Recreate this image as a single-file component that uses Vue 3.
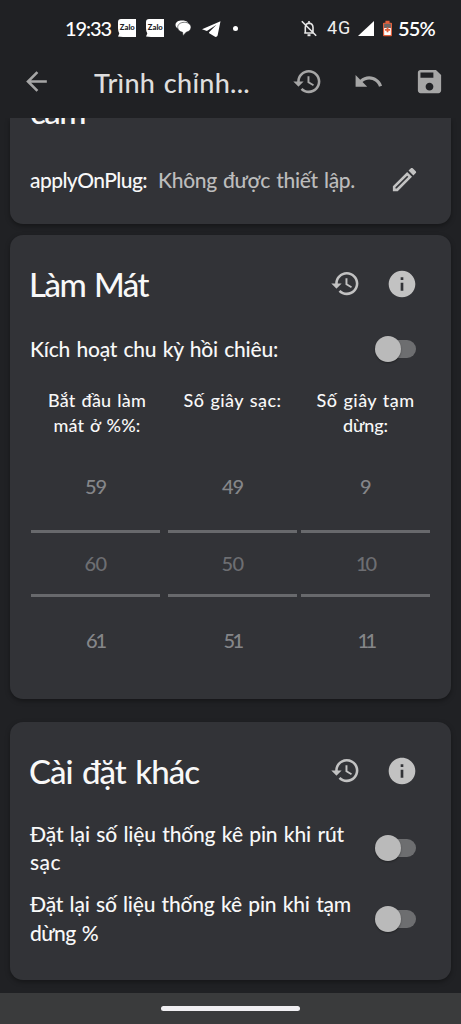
<script setup>
const icons = {
  back: 'M20 11H7.83l5.59-5.59L12 4l-8 8 8 8 1.41-1.41L7.83 13H20v-2z',
  history:
    'M13 3c-4.97 0-9 4.03-9 9H1l3.89 3.89.07.14L9 12H6c0-3.87 3.13-7 7-7s7 3.13 7 7-3.13 7-7 7c-1.93 0-3.68-.79-4.94-2.06l-1.42 1.42C8.27 19.99 10.51 21 13 21c4.97 0 9-4.03 9-9s-4.03-9-9-9zm-1 5v5l4.28 2.54.72-1.21-3.5-2.08V8H12z',
  undo: 'M12.5 8c-2.65 0-5.05.99-6.9 2.6L2 7v9h9l-3.62-3.62c1.39-1.16 3.16-1.88 5.12-1.88 3.54 0 6.55 2.31 7.6 5.5l2.37-.78C21.08 11.03 17.15 8 12.5 8z',
  save: 'M17 3H5c-1.11 0-2 .9-2 2v14c0 1.1.89 2 2 2h14c1.1 0 2-.9 2-2V7l-4-4zm-5 16c-1.66 0-3-1.34-3-3s1.34-3 3-3 3 1.34 3 3-1.34 3-3 3zm3-10H5V5h10v4z',
  edit: 'M17.66 3c-.25 0-.51.1-.7.29l-1.83 1.83 3.75 3.75 1.83-1.83c.39-.39.39-1.02 0-1.41l-2.34-2.34c-.2-.2-.45-.29-.71-.29zM14.06 6.19L3 17.25V21h3.75L17.81 9.94l-3.75-3.75zM14.06 9.02l.92.92L5.92 19H5v-.92z',
  info: 'M12 2C6.48 2 2 6.48 2 12s4.48 10 10 10 10-4.48 10-10S17.52 2 12 2zm1 15h-2v-6h2v6zm0-8h-2V7h2v2z',
}

const pickers = [
  { label: [['Bắt đầu làm', 98], ['mát ở %%:', 87]], values: [['59', 21], ['60', 22], ['61', 19]] },
  { label: [['Số giây sạc:', 98]], values: [['49', 21], ['50', 22], ['51', 18]] },
  { label: [['Số giây tạm', 98], ['dừng:', 45]], values: [['9', 11], ['10', 19], ['11', 16]] },
]

const options = [
  [['Đặt lại số liệu thống kê pin khi rút', 314], ['sạc', 31]],
  [['Đặt lại số liệu thống kê pin khi tạm', 321], ['dừng %', 68]],
]

// Tracks a single line of text so that it spans the given width in pixels.
const vFit = {
  mounted(el, { value }) {
    const natural = el.getBoundingClientRect().width
    const count = [...el.textContent.trim()].length
    const spacing = (value - natural) / count
    el.style.letterSpacing = `${spacing.toFixed(3)}px`
  },
}
</script>

<template>
  <div class="screen">
    <header class="status">
      <div class="status-left">
        <div class="clock"><span v-fit="46" class="t">19:33</span></div>
        <svg v-for="n in 2" :key="n" class="zalo" viewBox="0 0 18 18">
          <path d="M3 0H18V18H5L0 17.4L1.3 14.5Q0 12.5 0 9V3Q0 0 3 0Z" fill="#fff" />
          <text x="9.3" y="11.4" text-anchor="middle" textLength="15" lengthAdjust="spacingAndGlyphs">Zalo</text>
        </svg>
        <svg class="chat" viewBox="0 0 16 16">
          <path d="M4.5 9.2C1.8 8.4.5 6.8.5 5C.5 2 3.5.6 7 .6C9.5.6 11.8 1.2 13 2.6" fill="#fff" />
          <path d="M9.4 2.3C13.3 2.3 16 4.4 16 7.3C16 9.9 14 11.6 11.2 12.2L8 15.8L7.6 12.3C4.6 11.8 2.7 9.9 2.7 7.3C2.7 4.4 5.4 2.3 9.4 2.3Z" fill="#fff" stroke="#202124" stroke-width=".6" />
        </svg>
        <svg class="plane" viewBox="0 0 19 16">
          <path d="M18.5.3L0 8.2L4.9 10L14.5 3.7L7 11.2L7.2 12.3L13.5 16Q15.3 16 15.6 14.6Z" fill="#fff" />
        </svg>
        <i class="dot"></i>
      </div>
      <div class="status-right">
        <svg class="bell" viewBox="0 0 16 17">
          <g fill="none" stroke="#e6e6e6" stroke-width="1.6">
            <path d="M3.2 13H13M4.3 12.5V7.2Q4.5 3.5 8 3.1Q11.8 3.5 12 7.2V12.5M8 3V1M.8 1.3L15.2 15.7" />
            <path d="M6.5 15.2H9.5" stroke-width="2" />
          </g>
        </svg>
        <div class="net"><span v-fit="24">4G</span></div>
        <svg class="signal" viewBox="0 0 16 15"><path d="M16 0V15H0Z" fill="#fff" /></svg>
        <svg class="battery" viewBox="0 0 10 17">
          <path d="M2.7 0H7.3V2H9Q10 2 10 3V16Q10 17 9 17H1Q0 17 0 16V3Q0 2 1 2H2.7Z" fill="#e2603c" />
          <path d="M1.3 3.3H8.7V8H1.3Z" fill="#6b6868" />
          <path d="M1.3 8H8.7V15.7H1.3Z" fill="#fff" />
          <path d="M4 7.2H6V9H7.8V11H6V12.6H4V11H2.2V9H4Z" fill="#e2603c" />
        </svg>
        <div class="percent"><span v-fit="37" class="t">55%</span></div>
      </div>
    </header>

    <div class="appbar">
      <svg class="icon" viewBox="0 0 24 24"><path :d="icons.back" /></svg>
      <h1><span v-fit="156" class="t">Trình chỉnh...</span></h1>
      <div class="actions">
        <svg v-for="name in ['history', 'undo', 'save']" :key="name" class="icon" viewBox="0 0 24 24">
          <path :d="icons[name]" />
        </svg>
      </div>
    </div>

    <main class="content">
      <section class="card plug">
        <h2 class="cut"><span v-fit="55" class="t">cắm</span></h2>
        <div class="plug-row">
          <span v-fit="117" class="t">applyOnPlug:</span>
          <span v-fit="197" class="t muted">Không được thiết lập.</span>
          <svg class="icon light edit" viewBox="0 0 24 24"><path fill-rule="evenodd" :d="icons.edit" /></svg>
        </div>
      </section>

      <section class="card cooling">
        <div class="heading">
          <h2><span v-fit="119" class="t">Làm Mát</span></h2>
          <svg class="icon light" viewBox="0 0 24 24"><path :d="icons.history" /></svg>
          <svg class="icon light" viewBox="0 0 24 24"><path :d="icons.info" /></svg>
        </div>
        <div class="option single">
          <p><span v-fit="248" class="t">Kích hoạt chu kỳ hồi chiêu:</span></p>
          <span class="toggle"><i></i></span>
        </div>
        <div class="pickers">
          <div v-for="(picker, i) in pickers" :key="i" class="picker">
            <div class="label">
              <div v-for="line in picker.label" :key="line[0]"><span v-fit="line[1]" class="t">{{ line[0] }}</span></div>
            </div>
            <div class="wheel">
              <div v-for="(v, k) in picker.values" :key="v[0]" :class="['value', { selected: k === 1 }]">
                <span v-fit="v[1]" class="t">{{ v[0] }}</span>
              </div>
            </div>
          </div>
        </div>
      </section>

      <section class="card other">
        <div class="heading">
          <h2><span v-fit="170" class="t">Cài đặt khác</span></h2>
          <svg class="icon light" viewBox="0 0 24 24"><path :d="icons.history" /></svg>
          <svg class="icon light" viewBox="0 0 24 24"><path :d="icons.info" /></svg>
        </div>
        <div v-for="(option, i) in options" :key="i" class="option">
          <p>
            <template v-for="line in option" :key="line[0]"><span v-fit="line[1]" class="t">{{ line[0] }}</span><br /></template>
          </p>
          <span class="toggle"><i></i></span>
        </div>
      </section>
    </main>

    <footer class="nav"><i></i></footer>
  </div>
</template>

<style>
html,
body {
  background: #202124;
}
</style>

<style scoped>
* {
  box-sizing: border-box;
}
.screen {
  width: 461px;
  height: 1024px;
  display: flex;
  flex-direction: column;
  overflow: hidden;
  background: #202124;
  color: #f8f8f8;
  font-family: Lato, 'Noto Sans', sans-serif;
  font-weight: 500;
  white-space: nowrap;
}
svg {
  display: block;
  flex: none;
}
h1,
h2,
p {
  margin: 0;
  font-weight: inherit;
}
.t {
  display: inline-block;
  word-spacing: 0.06em;
}

.status {
  height: 56px;
  padding: 0 26px 0 65px;
  display: flex;
  justify-content: space-between;
  color: #fff;
  line-height: 58px;
}
.status-left,
.status-right {
  display: flex;
  align-items: center;
}
.clock {
  width: 47px;
  font-size: 20px;
}
.zalo {
  width: 18px;
  height: 18px;
  margin: 0 4px 0 6px;
}
.zalo + .zalo {
  margin: 0 0 0 6px;
}
.zalo text {
  font: 900 7px Lato, sans-serif;
  fill: #202124;
}
.chat {
  width: 16px;
  height: 16px;
  margin-left: 11px;
}
.plane {
  width: 19px;
  height: 16px;
  margin: 1px 0 0 11px;
}
.dot {
  width: 5px;
  height: 5px;
  margin-left: 12px;
  border-radius: 50%;
  background: #fff;
}
.bell {
  width: 16px;
  height: 17px;
}
.net {
  width: 24px;
  margin-left: 10px;
  font: 400 18px/58px Roboto, sans-serif;
  color: #eee;
}
.net span {
  display: inline-block;
}
.signal {
  width: 16px;
  height: 15px;
  margin-left: 7px;
}
.battery {
  width: 9px;
  height: 17px;
  margin: 0 6px 0 9px;
}
.percent {
  width: 37px;
  font-size: 20px;
  font-weight: 600;
}

.appbar {
  height: 62px;
  padding: 10px 16px 0 21px;
  display: flex;
  align-items: flex-start;
}
.appbar h1 {
  margin-left: 42px;
  font-size: 27px;
  line-height: 33px;
  color: #dedede;
}
.icon {
  width: 31px;
  height: 31px;
  fill: #a6a6a6;
}
.icon.light {
  fill: #c2c2c2;
}
.actions {
  margin-left: auto;
  display: flex;
  gap: 30px;
}

.content {
  height: 875px;
  padding: 0 10px;
  overflow: hidden;
}
.card {
  border-radius: 13px;
  background: #323337;
  box-shadow: 0 2px 5px rgba(0, 0, 0, 0.35);
  padding: 0 21px 0 20px;
}
.plug {
  height: 106px;
  border-radius: 0 0 13px 13px;
  overflow: hidden;
}
h2 {
  font-size: 33px;
  line-height: 40px;
}
.heading h2 {
  margin-left: -1px;
  margin-right: auto;
}
.cut {
  margin-top: -27px;
}
.plug-row {
  margin-top: 28px;
  height: 40px;
  display: flex;
  align-items: center;
  font-size: 21px;
}
.muted {
  margin-left: 11px;
  color: #bcbcbc;
}
.edit {
  margin-left: auto;
  margin-right: 10px;
}

.cooling {
  height: 464px;
  margin-top: 11px;
  padding-top: 28px;
}
.other {
  height: 258px;
  margin-top: 23px;
  padding-top: 28px;
}
.heading {
  height: 41px;
  display: flex;
  align-items: center;
}
.heading .icon {
  margin-right: 25px;
}
.heading .icon:last-child {
  width: 32px;
  height: 32px;
  margin-right: 12px;
}
.option {
  height: 57px;
  margin-bottom: 13.5px;
  display: flex;
  align-items: center;
  justify-content: space-between;
  font-size: 21px;
  line-height: 28.5px;
}
.other .heading {
  margin-bottom: 28.5px;
}
.option.single {
  margin: 16px 0 11px;
}
.single p {
  padding-top: 2px;
}
.toggle {
  width: 41px;
  height: 26px;
  margin-right: 14px;
  display: flex;
  align-items: center;
}
.toggle i {
  width: 26px;
  height: 26px;
  border-radius: 50%;
  background: #bababa;
  box-shadow: 0 1px 2px rgba(0, 0, 0, 0.35);
  z-index: 1;
}
.toggle::after {
  content: '';
  width: 28px;
  height: 18px;
  margin-left: -13px;
  border-radius: 9px;
  background: #6d6e70;
}

.pickers {
  display: grid;
  grid-template-columns: 129px 129px 129px;
  margin-left: 1px;
}
.picker:nth-child(2) {
  margin-left: 8px;
  margin-right: -8px;
}
.picker:nth-child(3) {
  margin-left: 12px;
  margin-right: -12px;
}
.label {
  height: 60px;
  text-align: center;
  font-size: 18px;
  line-height: 25px;
}
.picker:first-child .label {
  padding-left: 3px;
}
.wheel {
  font-size: 20px;
  color: #858689;
}
.value {
  height: 77px;
  text-align: center;
  line-height: 77px;
}
.selected {
  height: 67px;
  margin: 5px 0;
  line-height: 60px;
  color: #6d6e72;
  border: solid #68696c;
  border-width: 3px 0;
}
.value:last-child {
  line-height: 76px;
}

.nav {
  height: 31px;
  display: flex;
  justify-content: center;
  align-items: center;
  background: #3a3b3c;
}
.nav i {
  width: 139px;
  height: 5px;
  border-radius: 3px;
  background: #f0eff2;
}
</style>
